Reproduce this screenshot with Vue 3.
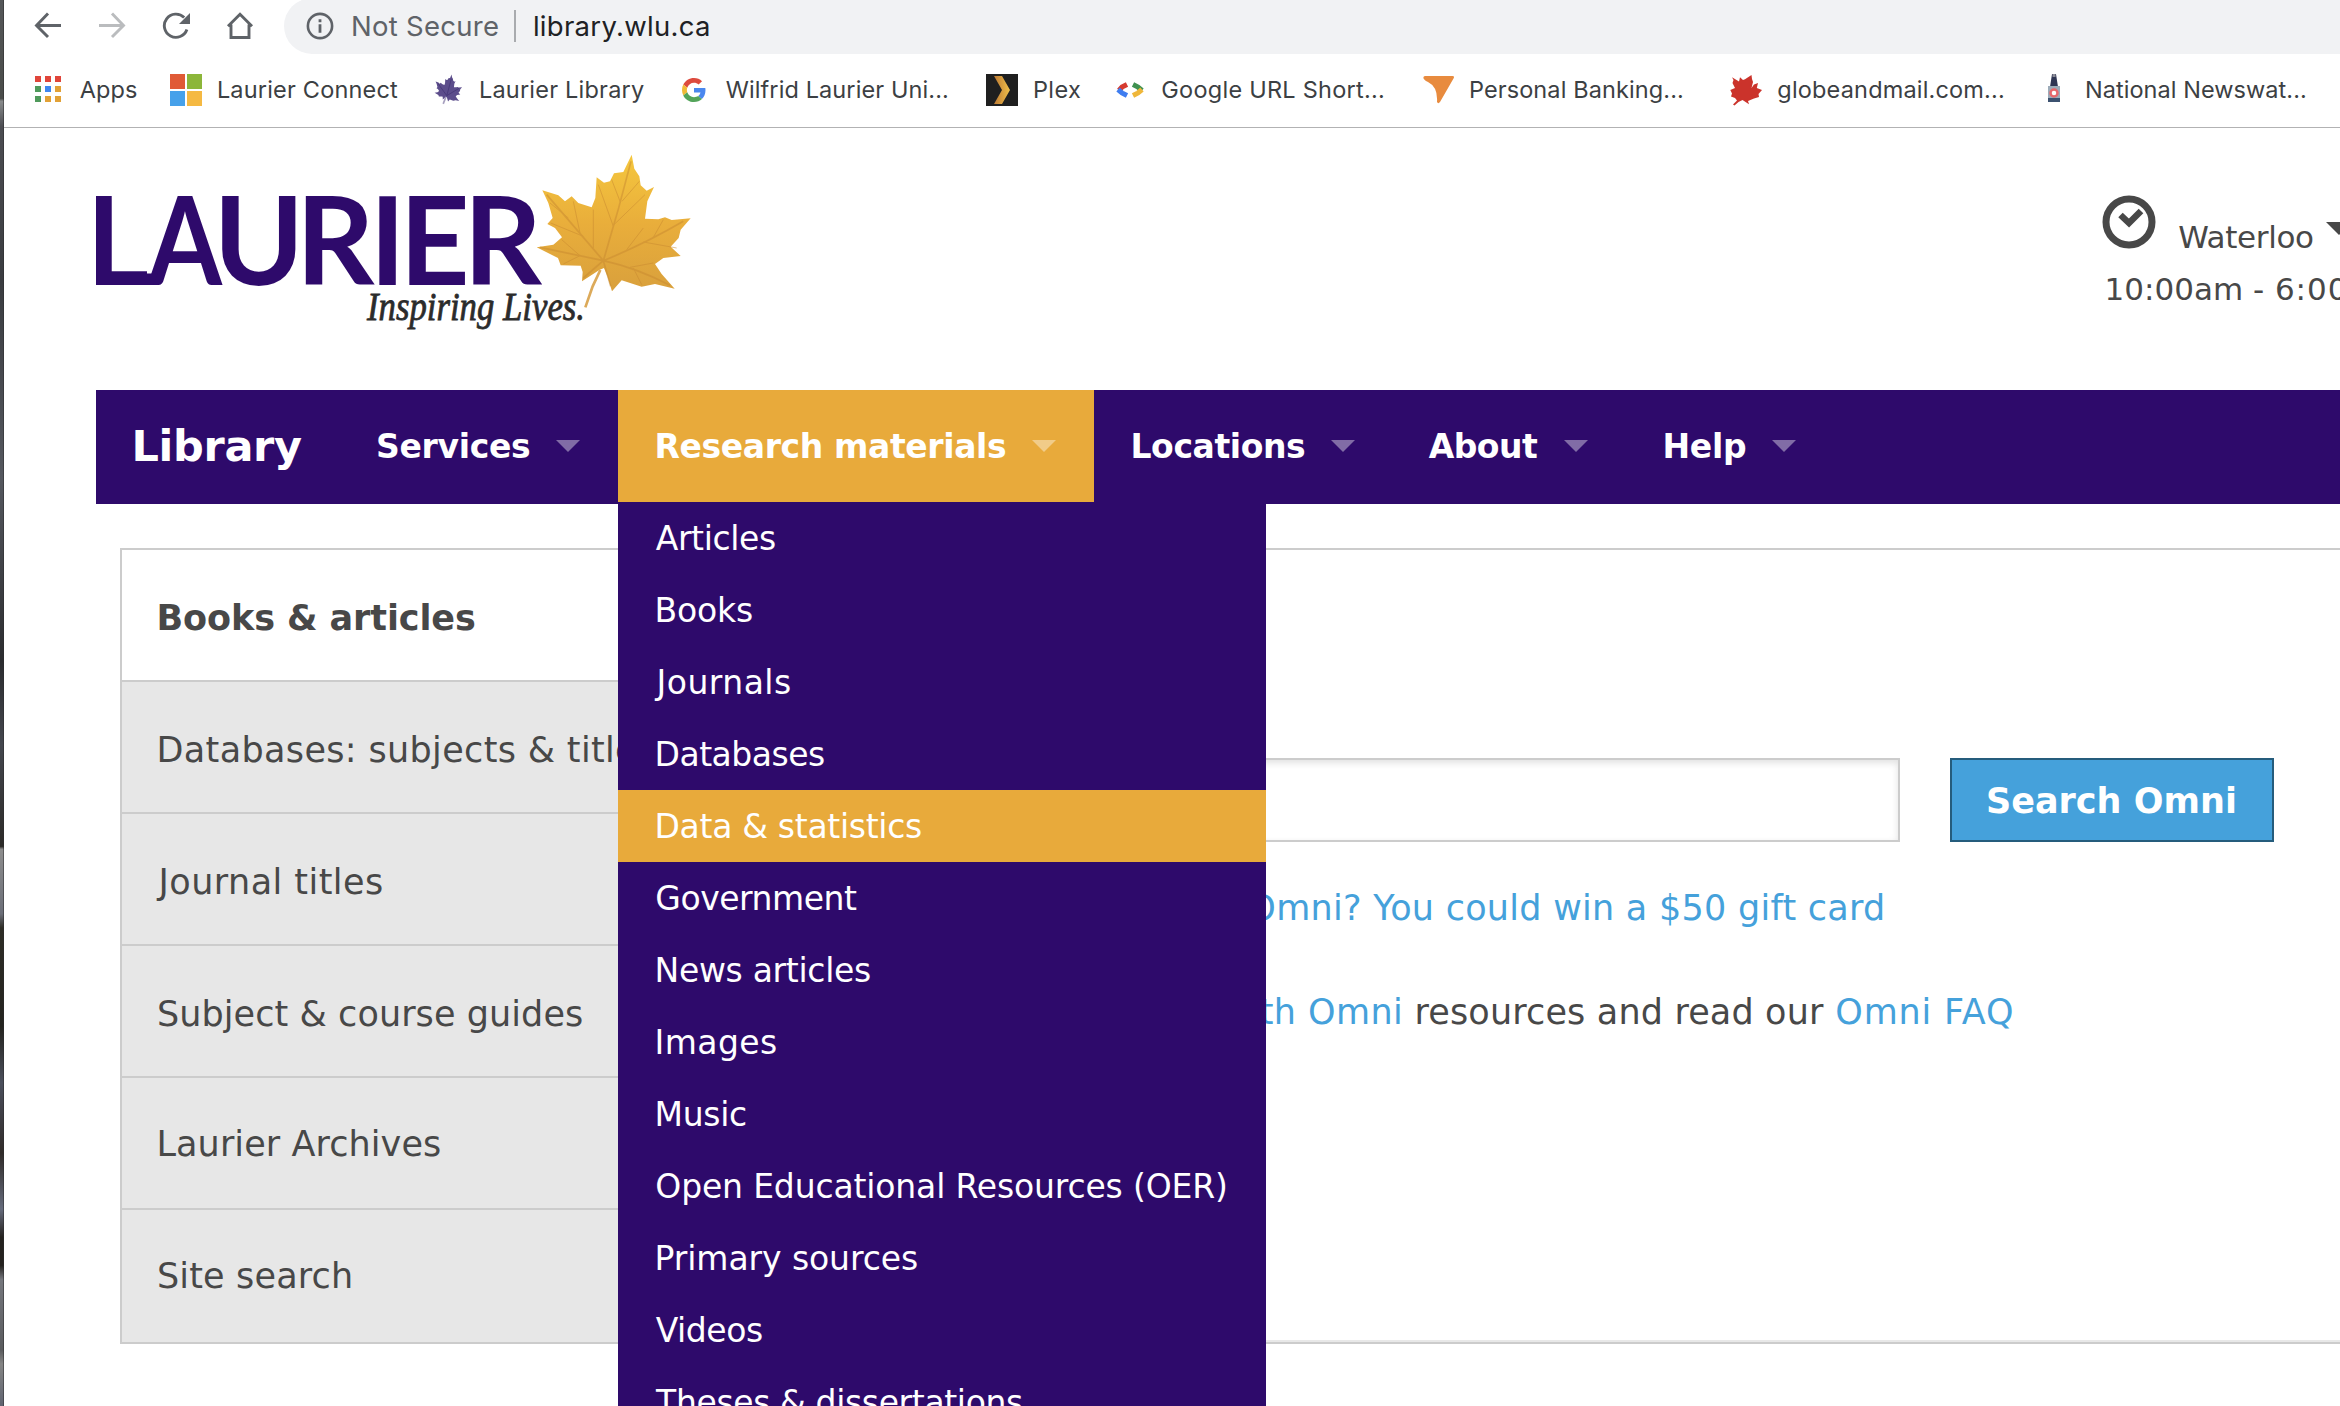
<script setup>
// Spreads a label so that its visible glyphs span the given width in pixels.
const ctx = document.createElement('canvas').getContext('2d')
const vFit = {
  mounted(el, { value }) {
    const text = el.textContent
    ctx.font = getComputedStyle(el).font
    const m = ctx.measureText(text)
    const indent = m.actualBoundingBoxLeft * 0.4 - 1.3
    el.style.width = value + 'px'
    el.style.textIndent = indent + 'px'
    el.style.letterSpacing = (value - m.actualBoundingBoxRight - indent) / (text.length - 1) + 'px'
  },
}

const leaf =
  'M305 20L313 62L328 85L332 112L350 128L372 117L352 160L345 212L385 214L405 208L425 216L482 211L452 245L446 270L422 296L452 324L400 330L375 348L395 378L434 422L375 408L335 416L275 397L246 430L232 385L222 360L208 366L156 400L158 372L152 353L92 352L84 330L20 298L70 290L96 268L75 240L52 228L68 210L55 165L37 127L85 142L105 160L125 145L145 165L185 178L196 150L200 88L222 104L240 100L252 76L280 72Z'

const bookmarks = [
  { icon: 'apps', label: 'Apps', w: 56, slot: 138 },
  { icon: 'windows', label: 'Laurier Connect', w: 179, slot: 262 },
  { icon: 'leaf', label: 'Laurier Library', w: 163, slot: 246 },
  { icon: 'google', label: 'Wilfrid Laurier Uni...', w: 220, slot: 308 },
  { icon: 'plex', label: 'Plex', w: 46, slot: 128 },
  { icon: 'code', label: 'Google URL Short...', w: 220, slot: 308 },
  { icon: 'bank', label: 'Personal Banking...', w: 211, slot: 308 },
  { icon: 'maple', label: 'globeandmail.com...', w: 224, slot: 308 },
  { icon: 'bottle', label: 'National Newswat...', w: 218, slot: 302 },
]

const dots = ['#e0453a', '#e0453a', '#e0453a', '#4f9a5b', '#3f87f0', '#e2a136', '#4f9a5b', '#e2a136', '#e2a136']

const nav = [
  { label: 'Services', w: 152, lead: 38 },
  { label: 'Research materials', w: 349, lead: 39, active: true },
  { label: 'Locations', w: 172, lead: 39 },
  { label: 'About', w: 108, lead: 37 },
  { label: 'Help', w: 81, lead: 39 },
]

const menu = [
  { label: 'Articles', w: 118 },
  { label: 'Books', w: 95 },
  { label: 'Journals', w: 133 },
  { label: 'Databases', w: 167 },
  { label: 'Data & statistics', w: 264, active: true },
  { label: 'Government', w: 200 },
  { label: 'News articles', w: 213 },
  { label: 'Images', w: 119 },
  { label: 'Music', w: 89 },
  { label: 'Open Educational Resources (OER)', w: 569 },
  { label: 'Primary sources', w: 260 },
  { label: 'Videos', w: 105 },
  { label: 'Theses & dissertations', w: 365 },
]

const tabs = [
  { label: 'Books & articles', w: 316, active: true },
  { label: 'Databases: subjects & titles', w: 495 },
  { label: 'Journal titles', w: 223 },
  { label: 'Subject & course guides', w: 423 },
  { label: 'Laurier Archives', w: 281, raised: true },
  { label: 'Site search', w: 192, raised: true },
]
</script>

<template>
  <div class="screen">
    <div class="desktop"></div>
    <div class="window">
      <header class="chrome">
        <div class="toolbar">
          <svg class="nav-icon" viewBox="0 0 28 28"><path d="M27 13.5H3M14 1.5L2.5 13.5L14 25" fill="none" stroke="#5f6368" stroke-width="2.9" /></svg>
          <svg class="nav-icon" viewBox="0 0 28 28"><path d="M1 13.5H25M14 1.5L25.5 13.5L14 25" fill="none" stroke="#babcbe" stroke-width="2.9" /></svg>
          <svg class="nav-icon" viewBox="0 0 28 28">
            <path d="M24.9 17.5A11.6 11.6 0 1 1 22.2 5.6" fill="none" stroke="#5f6368" stroke-width="2.9" />
            <path d="M28 1V12H17Z" fill="#5f6368" />
          </svg>
          <svg class="nav-icon" viewBox="0 0 28 28"><path d="M2 14.3L14 2.3L26 14.3M5 12.5V25.5H23V12.5" fill="none" stroke="#5f6368" stroke-width="2.9" /></svg>
          <div class="omnibox">
            <svg class="info" viewBox="0 0 28 28">
              <circle cx="14" cy="14" r="12.1" fill="none" stroke="#5f6368" stroke-width="2.6" />
              <path d="M12.6 7.3h2.8v2.9h-2.8zM12.6 12.2h2.8v8.5h-2.8z" fill="#5f6368" />
            </svg>
            <span v-fit="145" class="fit insecure">Not Secure</span>
            <i class="divider"></i>
            <span v-fit="174" class="fit url">library.wlu.ca</span>
          </div>
        </div>
        <div class="bookmarks">
          <div v-for="b in bookmarks" :key="b.label" class="bookmark" :style="{ width: b.slot + 'px' }">
            <svg class="favicon" viewBox="0 0 32 32">
              <template v-if="b.icon === 'apps'">
                <rect v-for="(c, i) in dots" :key="i" :x="3 + (i % 3) * 10" :y="2 + Math.floor(i / 3) * 10" width="6" height="6" :fill="c" />
              </template>
              <template v-else-if="b.icon === 'windows'">
                <path d="M0 0h15v15H0z" fill="#e05a36" /><path d="M17 0h15v15H17z" fill="#8cb63a" />
                <path d="M0 17h15v15H0z" fill="#46a1ea" /><path d="M17 17h15v15H17z" fill="#f5b942" />
              </template>
              <g v-else-if="b.icon === 'leaf'" transform="translate(1.4 -.8) scale(.0595 .066)">
                <path :d="leaf" fill="#5c4d8b" />
                <path d="M210 360L165 465" stroke="#a7a0bf" stroke-width="28" />
                <path d="M225 340L300 90M225 340L80 160M225 340L430 230" fill="none" stroke="#473878" stroke-width="14" />
              </g>
              <g v-else-if="b.icon === 'google'" transform="translate(4 4) scale(.5)">
                <path fill="#dd4b3e" d="M24 9.5c3.54 0 6.71 1.22 9.21 3.6l6.85-6.85C35.9 2.38 30.47 0 24 0 14.62 0 6.51 5.38 2.56 13.22l7.98 6.19C12.43 13.72 17.74 9.5 24 9.5z" />
                <path fill="#4a87ee" d="M46.98 24.55c0-1.57-.15-3.09-.38-4.55H24v9.02h12.94c-.58 2.96-2.26 5.48-4.78 7.18l7.73 6c4.51-4.18 7.09-10.36 7.09-17.65z" />
                <path fill="#f0ba36" d="M10.53 28.59c-.48-1.45-.76-2.99-.76-4.59s.27-3.14.76-4.59l-7.98-6.19C.92 16.46 0 20.12 0 24c0 3.88.92 7.54 2.56 10.78l7.97-6.19z" />
                <path fill="#53a45a" d="M24 48c6.48 0 11.93-2.13 15.89-5.81l-7.73-6c-2.15 1.45-4.92 2.3-8.16 2.3-6.26 0-11.57-4.22-13.47-9.91l-7.98 6.19C6.51 42.62 14.62 48 24 48z" />
              </g>
              <template v-else-if="b.icon === 'plex'">
                <defs>
                  <linearGradient id="plexGold"><stop offset="0" stop-color="#bd7a34" /><stop offset="1" stop-color="#f0c04a" /></linearGradient>
                </defs>
                <path d="M0 0h32v32H0z" fill="#1f1f1f" />
                <path d="M8 2h8l8 14l-8 14H8l8-14z" fill="url(#plexGold)" />
              </template>
              <g v-else-if="b.icon === 'code'" fill="none" stroke-width="5">
                <path d="M13 10.5L8 13L5 16.5" stroke="#d63b30" /><path d="M4 15.5L8 19L13 21.5" stroke="#3f7df0" />
                <path d="M19 10.5L24 13L28 16.5" stroke="#3f9150" /><path d="M28 15.5L24 19L19 21.5" stroke="#efb73a" />
              </g>
              <path v-else-if="b.icon === 'bank'" d="M1.4 3.5Q1.4 2 3 2H30.5Q32.6 2 31.8 4L18 28Q16.2 30.3 15 28Q16 13 6 8Q1.2 5.5 1.4 3.5Z" fill="#e88b3e" />
              <path v-else-if="b.icon === 'maple'" d="M2 3.3L9 7.5L10 3.3L13 6L15 5.3L21.5 1L22 5L23 8L21.5 14L24 10.5L28 9L26.8 14L32 16L28.5 20L29 23L24 24.5L18 27L19 30.3L12.5 26L8.5 28L4.5 31.5L3 30.5L7 26.5L5 24L1 22.5L2 19.5L.3 16L5 14L2.5 9L3.5 6Z" fill="#cb332b" />
              <g v-else>
                <path d="M14 0h4l2 13h-8z" fill="#2f3553" /><path d="M14.5 0h3v3h-3z" fill="#8c8d98" />
                <path d="M10 12h12v16H10z" fill="#9cabb9" /><path d="M10 24h12v4H10z" fill="#3c5270" />
                <circle cx="16" cy="19" r="3.5" fill="#fff" stroke="#e8686c" stroke-width="2.5" />
              </g>
            </svg>
            <span v-fit="b.w" class="fit">{{ b.label }}</span>
          </div>
        </div>
      </header>

      <main class="page">
        <div class="masthead">
          <svg class="logo" viewBox="96 140 614 200" width="614" height="200">
            <defs>
              <linearGradient id="leafGold" x1="0" y1="0" x2="0" y2="1">
                <stop offset="0" stop-color="#f5c73e" /><stop offset=".5" stop-color="#e9ae3b" /><stop offset="1" stop-color="#d9a03c" />
              </linearGradient>
            </defs>
            <text class="wordmark" y="285"><tspan x="85.5">L</tspan><tspan x="148" textLength="74" lengthAdjust="spacingAndGlyphs">A</tspan><tspan x="213.5">U</tspan><tspan x="296">R</tspan><tspan x="369.5">I</tspan><tspan x="399.5">E</tspan><tspan x="463.5">R</tspan></text>
            <path d="M110 273.5H158L153 285H110Z" fill="#2e0a6b" />
            <text class="tagline" x="367" y="320" textLength="218" lengthAdjust="spacingAndGlyphs">Inspiring Lives.</text>
            <g transform="translate(530 148) scale(.33333)">
              <path :d="leaf" fill="url(#leafGold)" />
              <g fill="none" stroke="#c98a31" opacity=".5">
                <path stroke-width="5" d="M220 338Q265 190 303 40M220 338L50 140M220 338Q340 290 460 220M220 338L30 298M220 338Q320 360 420 412M220 338L242 415M220 338L160 390" />
                <path stroke-width="3" d="M250 235L205 110M252 230L345 140M272 165L245 95M276 160L328 100M160 265L62 225M150 255L130 160M115 210L60 165M290 305L340 240M340 282L440 300M370 268L400 215M150 323L95 275M150 323L100 348M300 358L370 345M310 360L335 410M190 300L190 185" />
              </g>
              <path d="M211 366L188 415L166 478" fill="none" stroke="#dcaa5a" stroke-width="8" />
            </g>
          </svg>
          <div class="hours">
            <div class="campus">
              <svg class="clock" viewBox="0 0 54 54">
                <circle cx="27" cy="27" r="23" fill="none" stroke="#484848" stroke-width="7" />
                <path d="M18.5 20L27 28L39 16" fill="none" stroke="#484848" stroke-width="6.5" />
              </svg>
              <span v-fit="133" class="fit place">Waterloo</span>
              <i class="caret"></i>
            </div>
            <div class="time"><span v-fit="156" class="fit">10:00am -</span><span v-fit="120" class="fit">6:00pm</span></div>
          </div>
        </div>

        <nav class="mainnav">
          <div class="brand"><span v-fit="168" class="fit">Library</span></div>
          <div v-for="n in nav" :key="n.label" class="navitem" :class="{ active: n.active }" :style="{ paddingLeft: n.lead + 'px' }">
            <span v-fit="n.w" class="fit">{{ n.label }}</span><i class="arrow"></i>
            <ul v-if="n.active" class="dropdown">
              <li v-for="m in menu" :key="m.label" :class="{ active: m.active }"><span v-fit="m.w" class="fit">{{ m.label }}</span></li>
            </ul>
          </div>
        </nav>

        <section class="panel">
          <div class="tabs">
            <div v-for="t in tabs" :key="t.label" class="tab" :class="{ active: t.active, raised: t.raised }"><span v-fit="t.w" class="fit">{{ t.label }}</span></div>
          </div>
          <div class="content">
            <div class="search">
              <div class="field"></div>
              <button class="go"><span v-fit="247" class="fit">Search Omni</span></button>
            </div>
            <p class="promo"><a v-fit="633" class="fit">Omni? You could win a $50 gift card</a></p>
            <p class="faq">
              <a v-fit="139" class="fit">th Omni</a><span v-fit="407" class="fit">resources and read our</span><a v-fit="175" class="fit">Omni FAQ</a>
            </p>
          </div>
        </section>
      </main>
    </div>
  </div>
</template>

<style scoped>
.screen {
  display: flex;
  width: 2340px;
  height: 1406px;
  overflow: hidden;
  background: #fff;
  color: #484848;
  font-family: 'DejaVu Sans', Verdana, sans-serif;
}
.fit {
  display: block;
  flex: none;
  white-space: nowrap;
}
.desktop {
  width: 4px;
  flex: none;
  background: linear-gradient(#555759, #4a4c4a 7%, #898b8c 7.2%, #4c4d52 9%, #3a3c40 20%, #55585f 34%, #2b2c2f 47%, #44474e 53%, #2c2a28 60.2%, #8d8d8d 60.4%, #6b6e78 65%, #2e2d26 66%, #24231f 73%, #4b4f5c 77%, #302b29 82%, #656b7c 86%, #25221f 88%, #24221f 90%, #75777d 91%, #5a5b5e 96%, #858585 97%, #5f6370);
  box-shadow: inset -1px 0 #2a2a2c80;
}
.window {
  flex: 1;
  min-width: 0;
}
.chrome {
  height: 127px;
  border-bottom: 1px solid #b2b2b3;
  font-family: Inter, sans-serif;
}
.toolbar {
  display: flex;
  height: 54px;
  padding-left: 30px;
}
.nav-icon {
  width: 28px;
  height: 28px;
  margin: 12px 36px 0 0;
  flex: none;
}
.omnibox {
  display: flex;
  align-items: center;
  width: 2100px;
  flex: none;
  margin: -2px 0 0 -6px;
  padding-left: 22px;
  border-radius: 28px 0 0 28px;
  background: #f1f2f4;
  font-size: 27.5px;
}
.info {
  width: 28px;
  height: 28px;
  margin-right: 19px;
}
.insecure {
  color: #5f6368;
}
.divider {
  width: 2px;
  height: 32px;
  margin: 0 19px 0 16px;
  background: #a9abae;
}
.url {
  color: #202124;
}
.bookmarks {
  display: flex;
  padding: 20px 0 0 28px;
}
.bookmark {
  display: flex;
  flex: none;
  height: 32px;
  gap: 17px;
  color: #3c4043;
  font-size: 23.5px;
  line-height: 32px;
}
.favicon {
  width: 32px;
  height: 32px;
  flex: none;
}
.masthead {
  display: flex;
  justify-content: space-between;
  height: 262px;
  padding-left: 92px;
}
.logo {
  margin-top: 12px;
}
.wordmark {
  font: bold 122px Lato, sans-serif;
  fill: #2e0a6b;
}
.tagline {
  font: italic 41px 'Liberation Serif', serif;
  fill: #2b2b2b;
  stroke: #2b2b2b;
  stroke-width: 0.8px;
}
.hours {
  width: 237px;
  padding-top: 67px;
  font-size: 31px;
}
.campus {
  display: flex;
  margin-left: -1px;
}
.clock {
  width: 54px;
  height: 54px;
  flex: none;
}
.place {
  margin: 24px 13px 0 24px;
  line-height: 36px;
}
.caret {
  flex: none;
  margin-top: 27px;
  border: 13px solid transparent;
  border-width: 13px 13px 0;
  border-top-color: #484848;
  height: 0;
}
.time {
  display: flex;
  gap: 14px;
  margin: 14px 0 0 4px;
  line-height: 40px;
}
.mainnav {
  display: flex;
  height: 114px;
  margin-left: 92px;
  background: #2e0a6b;
  color: #fff;
  font-size: 33px;
  font-weight: bold;
  line-height: 113px;
}
.brand {
  width: 206px;
  padding-left: 38px;
  font-size: 43px;
}
.navitem {
  position: relative;
  display: flex;
  height: 112px;
  padding-right: 38px;
}
.navitem.active {
  background: #e8aa3b;
}
.arrow {
  height: 0;
  margin: 50px 0 0 26px;
  border: 12px solid transparent;
  border-width: 12px 12px 0;
  border-top-color: #fff;
  opacity: 0.4;
}
.dropdown {
  position: absolute;
  z-index: 2;
  top: 112px;
  left: 0;
  width: 648px;
  margin: 0;
  padding: 0;
  list-style: none;
  background: #2e0a6b;
  font-weight: normal;
}
.dropdown li {
  height: 72px;
  padding-left: 39px;
  line-height: 73px;
}
.dropdown li.active {
  background: #e8aa3b;
}
.panel {
  display: flex;
  width: 2400px;
  margin: 44px 0 0 116px;
  border: 2px solid #ccc;
  font-size: 35px;
}
.tabs {
  width: 560px;
  flex: none;
}
.tab {
  box-sizing: border-box;
  height: 132px;
  padding: 3px 0 0 37px;
  border-bottom: 2px solid #ccc;
  background: #e7e7e7;
  line-height: 130px;
}
.tab.active {
  background: #fff;
  font-weight: bold;
}
.tab.raised {
  padding-top: 1px;
}
.tab:last-child {
  border-bottom: 0;
}
.content {
  flex: 1;
  box-sizing: border-box;
  padding: 208px 0 0 518px;
  border-bottom: 2px solid #e8e8e8;
}
.search {
  display: flex;
  gap: 50px;
}
.field {
  box-sizing: border-box;
  width: 700px;
  height: 84px;
  border: 2px solid #ccc;
  box-shadow: inset 0 3px 7px #0000001f;
}
.go {
  width: 324px;
  height: 84px;
  padding: 2px 0 0 36px;
  border: 2px solid #255c7c;
  background: #45a1db;
  color: #fff;
  font: bold 35px 'DejaVu Sans', sans-serif;
}
.go .fit {
  text-align: left;
}
a {
  color: #45a1db;
}
p {
  display: flex;
  margin: 0;
  line-height: 60px;
}
.promo {
  margin: 36px 0 0 50px;
}
.faq {
  gap: 15px;
  margin: 44px 0 0 61px;
}
.faq span {
  margin: 0 -2px 0 2px;
}
</style>

<style>
body {
  overflow: hidden;
}
</style>
